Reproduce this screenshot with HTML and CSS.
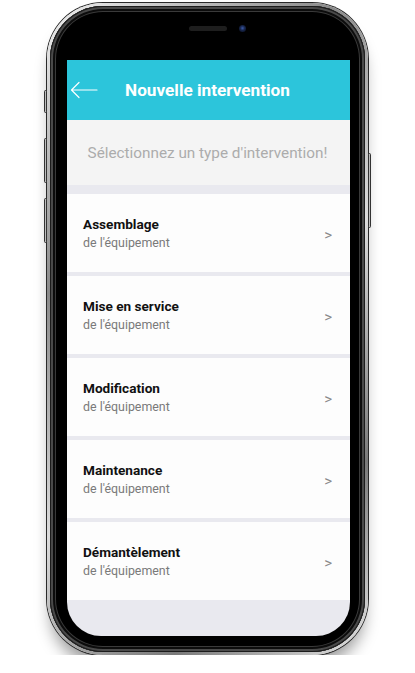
FILE: index.html
```html
<!DOCTYPE html>
<html lang="fr">
<head>
<meta charset="utf-8">
<title>Nouvelle intervention</title>
<link rel="stylesheet" href="styles.css">
</head>
<body>
<div class="phone">
  <span class="btn btn-l1"></span>
  <span class="btn btn-l2"></span>
  <span class="btn btn-l3"></span>
  <span class="btn btn-r1"></span>
  <div class="bezel">
    <div class="screen">
      <div class="status">
        <span class="speaker"></span>
        <span class="camera"></span>
      </div>
      <header class="appbar">
        <svg class="back" width="28" height="18" viewBox="0 0 28 18">
          <path d="M27 9H2M9 1.5L1.5 9L9 16.5" fill="none" stroke="#fff" stroke-width="1.2" stroke-linecap="round" stroke-linejoin="round"/>
        </svg>
        <h1 class="title">Nouvelle intervention</h1>
      </header>
      <div class="prompt">Sélectionnez un type d'intervention!</div>
      <div class="list">
        <div class="item"><div class="texts"><div class="name">Assemblage</div><div class="sub">de l'équipement</div></div><span class="chev">&gt;</span></div>
        <div class="item"><div class="texts"><div class="name">Mise en service</div><div class="sub">de l'équipement</div></div><span class="chev">&gt;</span></div>
        <div class="item"><div class="texts"><div class="name">Modification</div><div class="sub">de l'équipement</div></div><span class="chev">&gt;</span></div>
        <div class="item"><div class="texts"><div class="name">Maintenance</div><div class="sub">de l'équipement</div></div><span class="chev">&gt;</span></div>
        <div class="item"><div class="texts"><div class="name">Démantèlement</div><div class="sub">de l'équipement</div></div><span class="chev">&gt;</span></div>
      </div>
    </div>
  </div>
</div>
</body>
</html>
```
FILE: styles.css
```css
html, body {
  margin: 0;
  padding: 0;
  background: #fff;
  font-family: Roboto, "Liberation Sans", sans-serif;
}

.phone {
  position: relative;
  box-sizing: border-box;
  width: 321px;
  height: 652px;
  margin: 3px 0 0 47px;
  padding: 3px;
  border-radius: 56px;
  background: linear-gradient(135deg, #f2f2f2 0%, #8a8a8a 30%, #dcdcdc 55%, #7a7a7a 80%, #e6e6e6 100%);
  box-shadow: 0 0 0 1px #2a2a2a, 0 14px 16px -4px rgba(0, 0, 0, 0.4);
}

.btn {
  position: absolute;
  width: 3px;
  background: #bdbdbd;
  border: 1px solid #333;
  border-radius: 2px;
  box-sizing: border-box;
}
.btn-l1 { left: -3px; top: 87px; height: 23px; }
.btn-l2 { left: -3px; top: 135px; height: 45px; }
.btn-l3 { left: -3px; top: 195px; height: 45px; }
.btn-r1 { right: -3px; top: 150px; height: 75px; }

.bezel {
  box-sizing: border-box;
  height: 100%;
  padding: 16px 15px 16px 17px;
  border-radius: 53px;
  background: #000;
  box-shadow: inset 0 0 0 1px #1c1c1c, inset 0 0 0 3px #4a4a4a, inset 0 0 0 5px #0c0c0c, inset 0 0 0 6px #3a3a3a;
}

.screen {
  height: 614px;
  border-radius: 34px;
  overflow: hidden;
  background: #000;
  display: flex;
  flex-direction: column;
}

.status {
  height: 38px;
  flex: none;
  display: flex;
  align-items: flex-start;
  box-sizing: border-box;
  padding: 4px 0 0 122px;
  gap: 12px;
}
.speaker {
  width: 38px;
  height: 5px;
  border-radius: 3px;
  background: #1e1e1e;
}
.camera {
  width: 7px;
  height: 7px;
  margin-top: -1px;
  border-radius: 50%;
  background: radial-gradient(circle at 50% 45%, #3b5aa8 0, #16244a 45%, #0a0f1c 100%);
}

.appbar {
  height: 60px;
  flex: none;
  background: #2cc5db;
  display: flex;
  align-items: center;
  position: relative;
}
.back {
  position: absolute;
  left: 3px;
  top: 21px;
}
.title {
  margin: 0;
  width: 100%;
  text-align: center;
  color: #fff;
  font-size: 17.2px;
  font-weight: 700;
  padding-right: 2px;
}

.prompt {
  height: 65px;
  flex: none;
  background: #f4f4f4;
  color: #acacac;
  font-size: 15.3px;
  display: flex;
  align-items: center;
  justify-content: center;
  padding: 0 2px 0 0;
}

.list {
  flex: 1;
  background: #e9e9ef;
  padding-top: 9px;
  display: flex;
  flex-direction: column;
  gap: 4px;
}

.item {
  height: 78px;
  background: #fdfdfd;
  display: flex;
  align-items: center;
  justify-content: space-between;
  padding: 0 18px 0 16px;
}
.texts {
  display: flex;
  flex-direction: column;
  gap: 3px;
  margin-top: -1px;
}
.name {
  color: #111;
  font-size: 13.6px;
  font-weight: 700;
}
.sub {
  color: #7a7a7a;
  font-size: 12.4px;
}
.chev {
  color: #8a8a8a;
  font-size: 15px;
  margin-top: 3px;
}
```
